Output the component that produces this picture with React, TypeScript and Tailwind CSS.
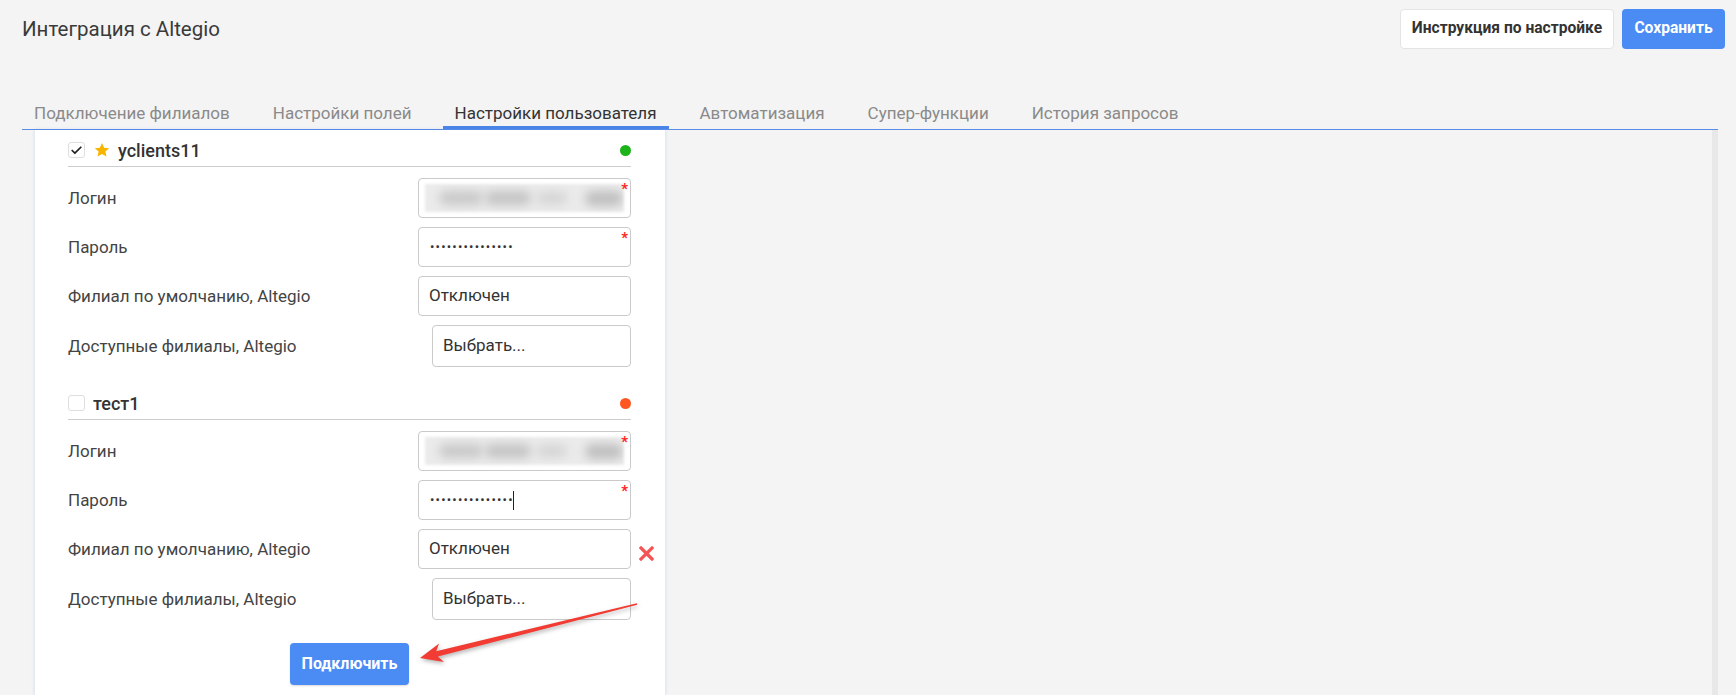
import { Check } from 'lucide-react';

const tabs = [
  'Подключение филиалов',
  'Настройки полей',
  'Настройки пользователя',
  'Автоматизация',
  'Супер-функции',
  'История запросов',
];

// hidden login value, shown as a smudge
function BlurredLogin() {
  return (
    <div className="flex h-[28px] w-full items-center overflow-hidden bg-[#ebebeb] blur-[1.5px]">
      <span className="ml-[14px] h-[14px] w-[44px] rounded-full bg-[#c9c9c9] blur-[5px]" />
      <span className="ml-[2px] h-[14px] w-[46px] rounded-full bg-[#c4c4c4] blur-[5px]" />
      <span className="ml-[6px] h-[12px] w-[30px] rounded-full bg-[#d4d4d4] blur-[5px]" />
      <span className="ml-[18px] h-[15px] w-[38px] rounded-full bg-[#bfbfbf] blur-[5px]" />
    </div>
  );
}

function Field({
  wide = true,
  tall = false,
  required = false,
  error = false,
  children,
}: {
  wide?: boolean;
  tall?: boolean;
  required?: boolean;
  error?: boolean;
  children: React.ReactNode;
}) {
  return (
    <div
      className={`relative flex items-center rounded-[4px] border border-[#cacaca] bg-white text-[17px] text-[#333] ${
        wide ? 'w-[213px] px-[6px]' : 'w-[199px] px-[10px]'
      } ${tall ? 'h-[42px]' : 'h-[40px]'}`}
    >
      {children}
      {required && (
        <span className="absolute right-[2px] top-[3px] text-[15px] leading-none font-bold text-[#ff1f1f]">*</span>
      )}
      {error && (
        <svg className="absolute left-[calc(100%+9px)] top-[16px] h-[15px] w-[15px]" viewBox="0 0 15 15">
          <path d="M2 2 L13 13 M13 2 L2 13" stroke="#f45454" strokeWidth="3.2" strokeLinecap="square" />
        </svg>
      )}
    </div>
  );
}

function Row({ label, children }: { label: string; children: React.ReactNode }) {
  return (
    <div className="flex items-center justify-between">
      <span className="pt-[2px] text-[17px] text-[#444]">{label}</span>
      {children}
    </div>
  );
}

function Account({
  name,
  checked,
  starred,
  online,
  typing,
}: {
  name: string;
  checked: boolean;
  starred: boolean;
  online: boolean;
  typing: boolean;
}) {
  return (
    <div>
      <div className="border-b border-[#cdcdcd] pt-[8px] pb-[4px]">
        <div className="flex h-[24px] items-center">
          <span className="flex h-[16px] w-[17px] items-center justify-center rounded-[3px] border border-[#dedede] bg-white">
            {checked && <Check className="h-[13px] w-[13px] text-[#222]" strokeWidth={3.2} />}
          </span>
          {starred && (
            <svg className="ml-[9px] h-[16px] w-[16px]" viewBox="0 0 24 24">
              <path
                d="M12 1.5l3.2 7 7.6.8-5.7 5.1 1.6 7.5L12 18l-6.7 3.9 1.6-7.5L1.2 9.3l7.6-.8z"
                fill="#f7b500"
              />
            </svg>
          )}
          <span className="ml-[8px] text-[18px] font-medium text-[#333]">{name}</span>
          <span
            className={`ml-auto h-[11px] w-[11px] rounded-full ${online ? 'bg-[#1db31a]' : 'bg-[#ff5722]'}`}
          />
        </div>
      </div>
      <div className="mt-[11px] flex flex-col gap-[9px]">
        <Row label="Логин">
          <Field required>
            <BlurredLogin />
          </Field>
        </Row>
        <Row label="Пароль">
          <Field required>
            <span className="pl-[5px] text-[13px] tracking-[1.2px] text-[#333]">•••••••••••••••</span>
            {typing && <span className="ml-[-1px] h-[19px] w-[1px] bg-[#222]" />}
          </Field>
        </Row>
        <Row label="Филиал по умолчанию, Altegio">
          <Field error={typing}>
            <span className="pl-[4px]">Отключен</span>
          </Field>
        </Row>
        <Row label="Доступные филиалы, Altegio">
          <Field wide={false} tall>
            <span>Выбрать...</span>
          </Field>
        </Row>
      </div>
    </div>
  );
}

export default function App() {
  return (
    <div className="relative h-[695px] w-full overflow-hidden bg-[#f4f4f4] font-['Roboto',sans-serif] text-[#333]">
      {/* Top bar */}
      <header className="mt-[9px] flex h-[40px] items-center justify-between pl-[22px] pr-[11px]">
        <h1 className="text-[20.5px] text-[#3a3a3a]">Интеграция с Altegio</h1>
        <div className="flex gap-[8px]">
          <button className="h-[40px] w-[214px] rounded-[4px] border border-[#e4e4e4] bg-white text-[15.6px] font-bold text-[#333]">
            Инструкция по настройке
          </button>
          <button className="h-[40px] w-[103px] rounded-[4px] bg-[#4b8bf4] text-[15.6px] font-bold text-white">
            Сохранить
          </button>
        </div>
      </header>

      {/* Tabs */}
      <nav className="mt-[50px] ml-[22px] mr-[18px] flex gap-[19px] border-b border-[#5b8ce8]">
        {tabs.map((t, i) => (
          <div
            key={t}
            className={`border-b-[3px] px-[12px] pt-[4px] pb-[3px] text-[17px] leading-[20px] ${
              i === 2 ? 'border-[#4a86e8] text-[#333]' : 'border-transparent text-[#8a8a8a]'
            }`}
          >
            {t}
          </div>
        ))}
      </nav>

      {/* Body */}
      <div className="ml-[22px] mr-[18px] flex h-[565px]">
        <div className="ml-[13px] w-[630px] bg-white pl-[33px] pr-[34px] shadow-[0_0_4px_rgba(70,120,210,0.22)]">
          <Account name="yclients11" checked starred online typing={false} />
          <div className="mt-[16px]">
            <Account name="тест1" checked={false} starred={false} online={false} typing />
          </div>
          <div className="mt-[23px] flex justify-center">
            <button className="h-[42px] w-[119px] rounded-[4px] bg-[#4b8bf4] text-[16px] font-bold text-white shadow-[0_1px_2px_rgba(0,0,0,0.15)]">
              Подключить
            </button>
          </div>
        </div>
        <div className="flex-1" />
        <div className="w-[6px] bg-[#e8e8e8]" />
      </div>

      {/* Annotation arrow */}
      <svg
        className="pointer-events-none absolute left-[410px] top-[595px] h-[75px] w-[240px] drop-shadow-[1px_2px_2px_rgba(0,0,0,0.3)]"
        viewBox="0 0 240 75"
      >
        <polygon
          points="10,63 34,67 27.8,61.6 227.2,9.8 226.8,8.2 26.2,56.2 29.1,48.6"
          fill="#f23c33"
        />
      </svg>
    </div>
  );
}
